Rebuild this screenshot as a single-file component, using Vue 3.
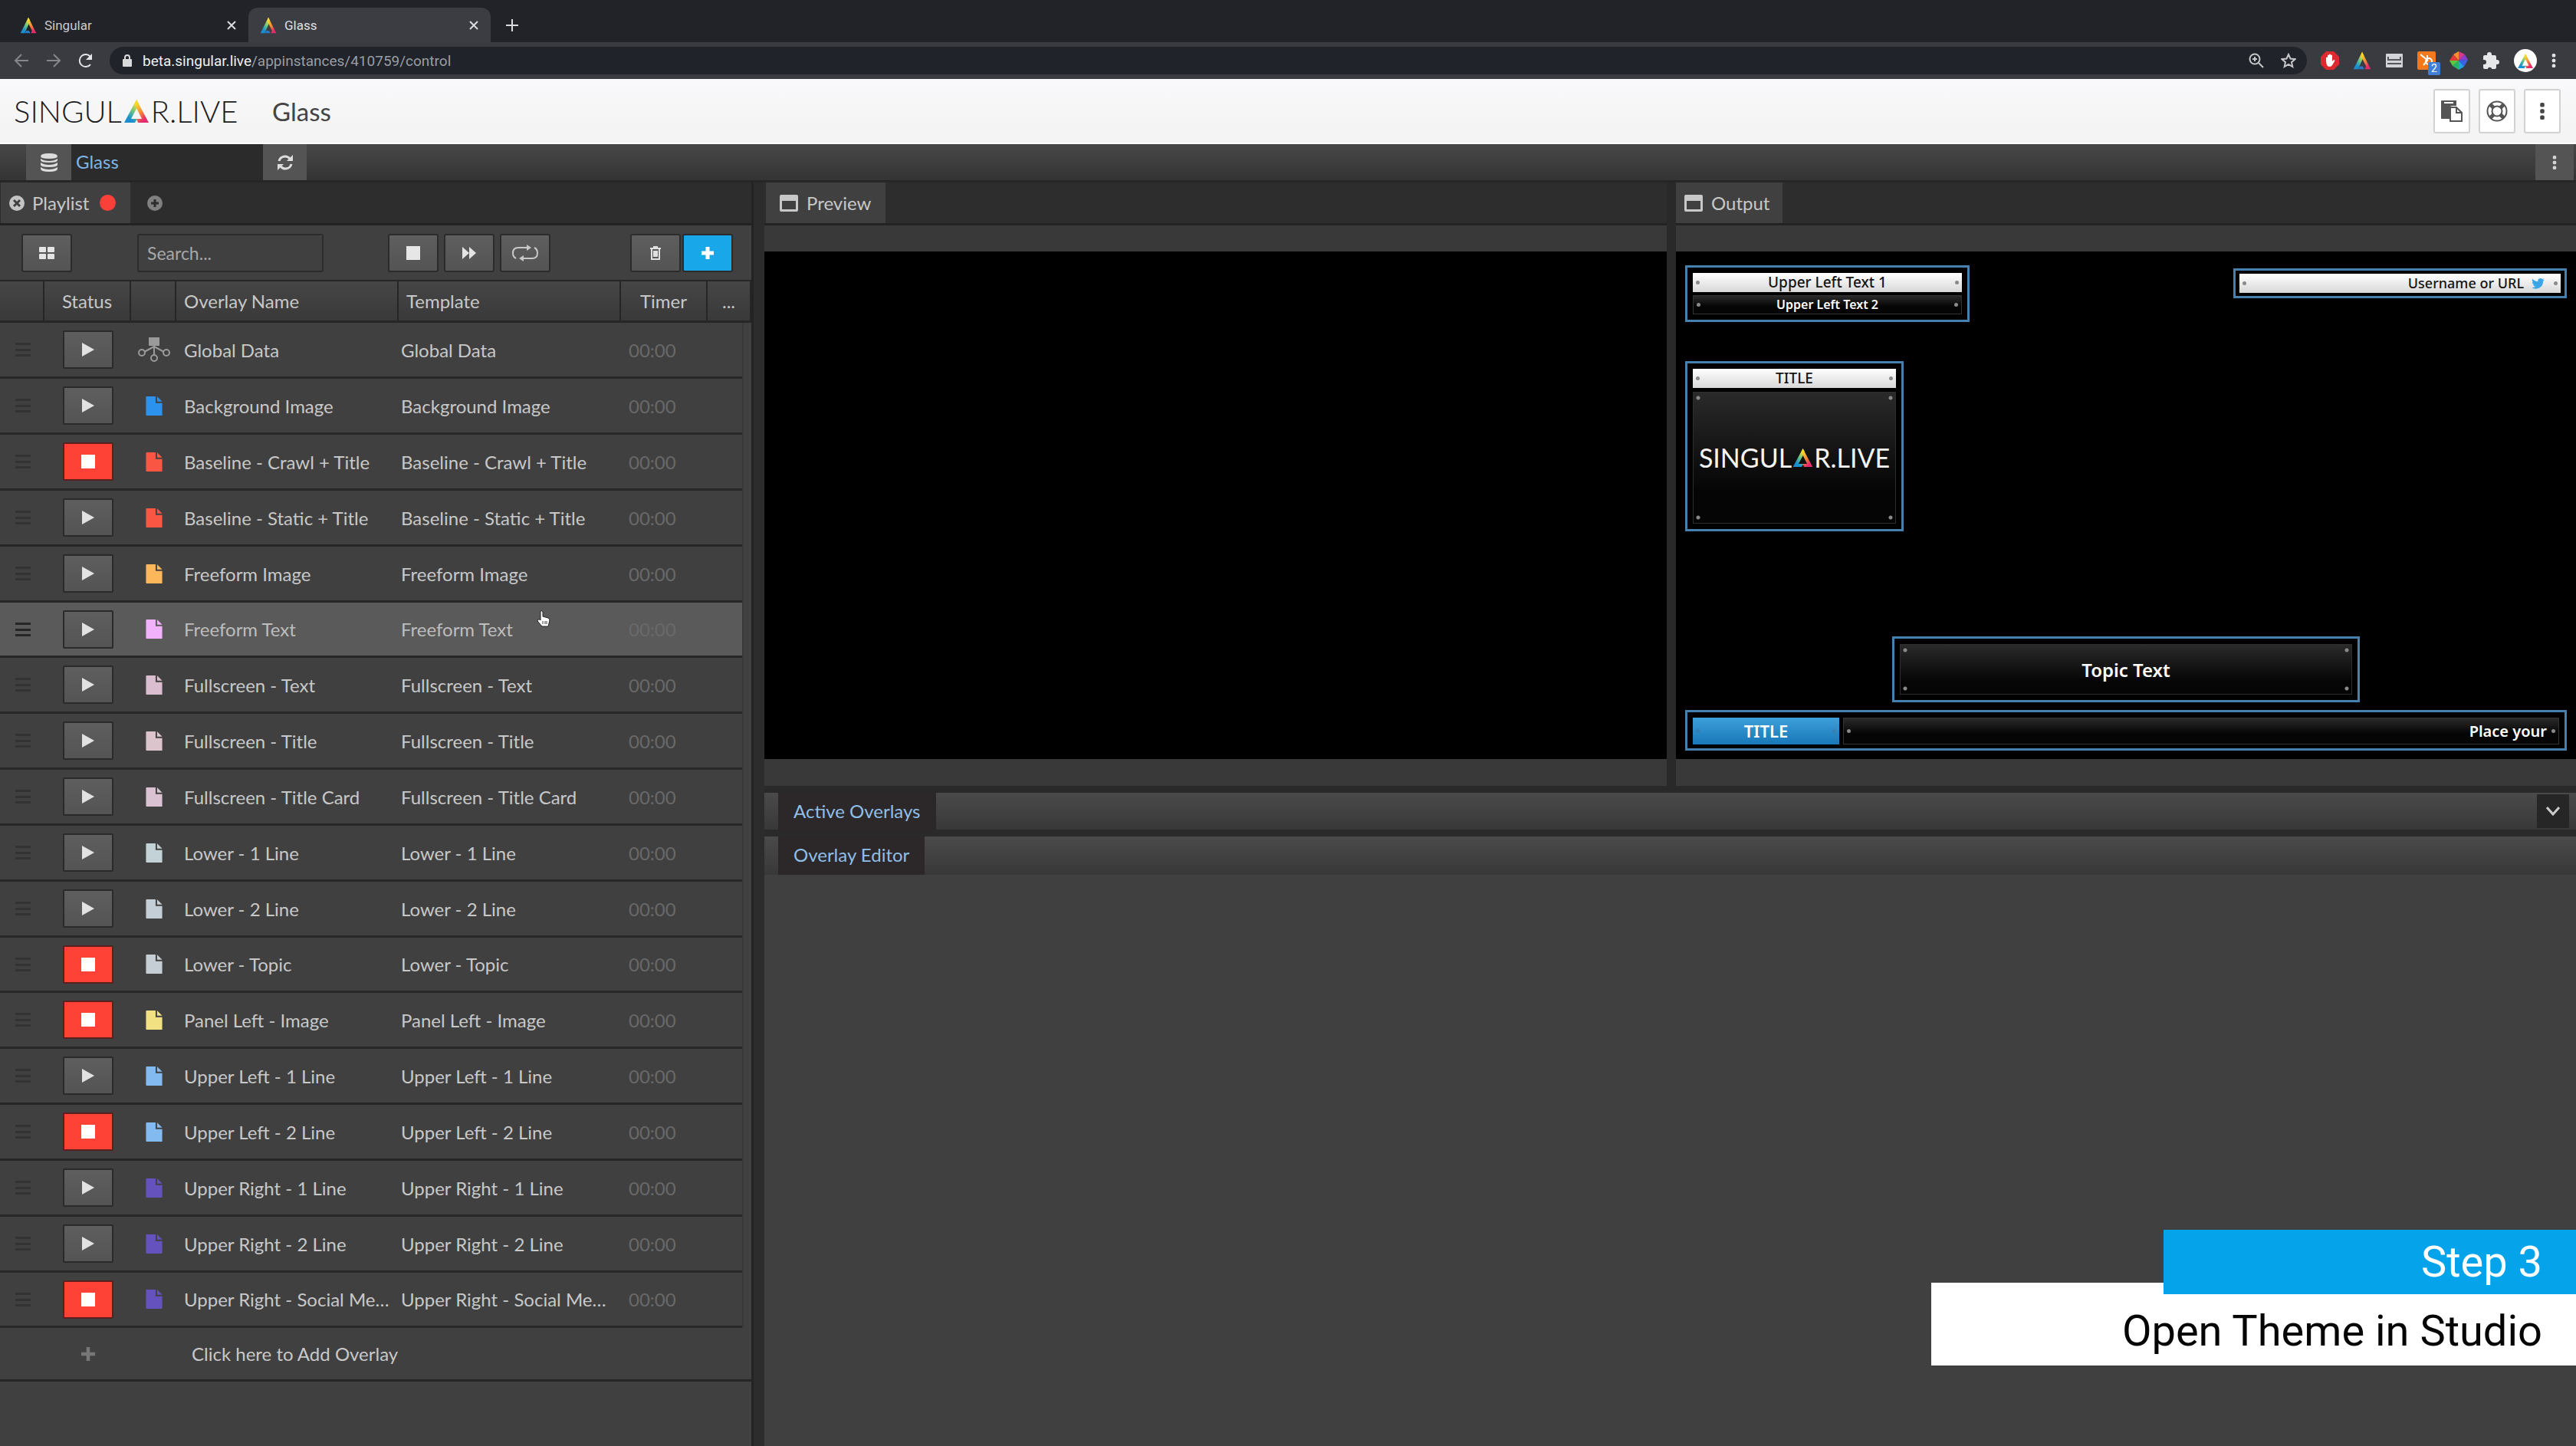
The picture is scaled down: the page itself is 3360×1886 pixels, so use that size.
<script setup>
import { ref } from 'vue'

const search = ref('')
const address = { host: 'beta.singular.live', path: '/appinstances/410759/control' }

const rows = [
  { name: 'Global Data', icon: 'global' },
  { name: 'Background Image', color: '#2b93ee' },
  { name: 'Baseline - Crawl + Title', color: '#f95743', live: true },
  { name: 'Baseline - Static + Title', color: '#f95743' },
  { name: 'Freeform Image', color: '#fdb75b' },
  { name: 'Freeform Text', color: '#f2b2fb', hover: true },
  { name: 'Fullscreen - Text', color: '#dabdce' },
  { name: 'Fullscreen - Title', color: '#dcc4cc' },
  { name: 'Fullscreen - Title Card', color: '#dac2d2' },
  { name: 'Lower - 1 Line', color: '#c2d2d6' },
  { name: 'Lower - 2 Line', color: '#c4ced6' },
  { name: 'Lower - Topic', color: '#c4ced4', live: true },
  { name: 'Panel Left - Image', color: '#f1e183', live: true },
  { name: 'Upper Left - 1 Line', color: '#83baf0' },
  { name: 'Upper Left - 2 Line', color: '#83baf0', live: true },
  { name: 'Upper Right - 1 Line', color: '#6552bd' },
  { name: 'Upper Right - 2 Line', color: '#6552bd' },
  { name: 'Upper Right - Social Media', color: '#6552bd', live: true },
]
</script>

<template>
  <svg class="defs" aria-hidden="true">
    <defs>
      <linearGradient id="legL" x1="0.8" y1="0" x2="0.2" y2="1">
        <stop offset="0.1" stop-color="#f5e02e" />
        <stop offset="0.5" stop-color="#5cc08a" />
        <stop offset="0.8" stop-color="#1a8fd0" />
      </linearGradient>
      <linearGradient id="legR" x1="0.2" y1="0" x2="0.8" y2="1">
        <stop offset="0.1" stop-color="#f7d92c" />
        <stop offset="0.5" stop-color="#f58a34" />
        <stop offset="0.85" stop-color="#e62a6c" />
      </linearGradient>
    </defs>
    <symbol id="tri" viewBox="0 0 32 30">
      <path d="M16 0 L0 30 H14 L17 25 H9 L17.500 9 L19 5 Z" fill="url(#legL)" />
      <path d="M16 0 L32 30 H18 L16 25 H23 L13.500 6 Z" fill="url(#legR)" />
    </symbol>
    <symbol id="peak" viewBox="0 0 32 32">
      <path d="M16 1 L1 31 H9 L18 11 L19 7 Z" fill="url(#legL)" />
      <path d="M16 1 L31 31 H21 L23 26 L14 8 Z" fill="url(#legR)" />
      <path d="M9 31 L12 26 H17 L20 31 Z" fill="#2a78c8" />
    </symbol>
    <symbol id="win" viewBox="0 0 24 22">
      <path fill-rule="evenodd" d="M2 0H22Q24 0 24 2V20Q24 22 22 22H2Q0 22 0 20V2Q0 0 2 0ZM3 8V19H21V8Z" fill="currentColor" />
    </symbol>
    <symbol id="dots" viewBox="0 0 8 24">
      <rect x="1" y="0" width="6" height="6" rx="2" fill="currentColor" />
      <rect x="1" y="9" width="6" height="6" rx="2" fill="currentColor" />
      <rect x="1" y="18" width="6" height="6" rx="2" fill="currentColor" />
    </symbol>
    <symbol id="doc" viewBox="0 0 22 26">
      <path d="M1 0H13V9H22V26H1Q0 26 0 25V1Q0 0 1 0Z" fill="currentColor" />
      <path d="M15 0L22 7H15Z" fill="currentColor" />
    </symbol>
  </svg>

  <div class="page">
    <!-- browser window -->
    <div class="tabs">
      <div class="tab">
        <svg class="fav"><use href="#peak" /></svg>
        <span class="tab-name">Singular</span>
        <button class="close" aria-label="Close Singular tab"><svg viewBox="0 0 12 12"><path d="M1 1L11 11M11 1L1 11" /></svg></button>
      </div>
      <div class="tab active">
        <svg class="fav"><use href="#peak" /></svg>
        <span class="tab-name">Glass</span>
        <button class="close" aria-label="Close Glass tab"><svg viewBox="0 0 12 12"><path d="M1 1L11 11M11 1L1 11" /></svg></button>
      </div>
      <button class="newtab" aria-label="New tab"><svg viewBox="0 0 16 16"><path d="M8 0V16M0 8H16" /></svg></button>
    </div>
    <div class="navbar">
      <div class="nav">
        <button class="navbtn dim" aria-label="Back"><svg viewBox="0 0 20 20"><path d="M19 10H2M10 2L2 10L10 18" /></svg></button>
        <button class="navbtn dim" aria-label="Forward"><svg viewBox="0 0 20 20"><path d="M1 10H18M10 2L18 10L10 18" /></svg></button>
        <button class="navbtn" aria-label="Reload"><svg viewBox="0 0 20 20"><path d="M16 15A8 8 0 1 1 16 5" /><path d="M18 1V9H10Z" fill="currentColor" stroke="none" /></svg></button>
      </div>
      <div class="omnibox">
        <svg class="lock" viewBox="0 0 12 16"><rect x="0" y="6" width="12" height="10" rx="1" fill="#d8d9db" /><path d="M3 7V4A3 3 0 0 1 9 4V7" fill="none" stroke="#d8d9db" stroke-width="2" /></svg>
        <span class="url"><b>{{ address.host }}</b>{{ address.path }}</span>
        <svg class="mag" viewBox="0 0 20 20"><circle cx="8" cy="8" r="6.500" /><path d="M13 13L19 19M5 8H11M8 5V11" /></svg>
        <svg class="star" viewBox="0 0 20 20"><path d="M10 2L12.500 7.500L18.500 8.200L14 12.200L15.300 18L10 15L4.700 18L6 12.200L1.500 8.200L7.500 7.500Z" /></svg>
      </div>
      <div class="exts">
        <svg viewBox="0 0 24 24"><path d="M7 0H17L24 7V17L17 24H7L0 17V7Z" fill="#dc2a2e" /><path d="M7 12V8Q8 7 9 8V5Q10 4 11 5V4Q12 3 13 4V5Q14 4 15 5V13L17 11Q19 11 18 13L15 18Q14 20 11 20Q7 19 7 12Z" fill="#fff" /></svg>
        <svg><use href="#peak" /></svg>
        <svg viewBox="0 0 24 24"><rect x="1" y="3" width="22" height="18" rx="1" fill="#d2d3d8" /><path d="M3 16H21M4 7V11H20V7" stroke="#55565c" stroke-width="2" fill="none" /></svg>
        <span class="hub">
          <svg viewBox="0 0 24 24"><rect width="24" height="24" rx="2" fill="#f2791e" /><path d="M4 4L14 12M13 5V12L8 18" stroke="#fff" stroke-width="2" fill="none" /><circle cx="15" cy="13" r="4" stroke="#fff" stroke-width="2" fill="none" /></svg>
          <span class="badge">2</span>
        </span>
        <svg viewBox="0 0 24 24">
          <path d="M12 12L12 0L5 4Z" fill="#f2912c" /><path d="M12 12V0L20 4Z" fill="#d83a8c" /><path d="M12 12L20 4L24 11Z" fill="#8a3fd0" /><path d="M12 12L24 11L19 20Z" fill="#3a62e8" /><path d="M12 12L19 20L12 24Z" fill="#22a4e0" /><path d="M12 12V24L4 19Z" fill="#28b463" /><path d="M12 12L4 19L0 12Z" fill="#5ac83c" /><path d="M12 12L0 12L5 4Z" fill="#e23c32" />
        </svg>
        <svg viewBox="0 0 24 24"><path d="M20 11H19V7Q19 5 17 5H13V4A3 3 0 0 0 7 4V5H4Q2 5 2 7V11H3A3 3 0 0 1 3 17H2V21Q2 23 4 23H8V22A3 3 0 0 1 13 22V23H17Q19 23 19 21V17H20A3 3 0 0 0 20 11Z" fill="#e6e7e9" /></svg>
        <span class="avatar"><svg><use href="#tri" /></svg></span>
        <svg class="vdots"><use href="#dots" /></svg>
      </div>
    </div>

    <!-- application header -->
    <header class="apphead">
      <a href="#" class="logo" aria-label="Singular.live">SINGUL<svg><use href="#tri" /></svg>R.LIVE</a>
      <h1>Glass</h1>
      <div class="headbtns">
        <button aria-label="Paste"><svg viewBox="0 0 28 28"><path d="M1 0H20V7H15Q11 7 11 10V24H1Q0 24 0 23V1Q0 0 1 0Z" fill="#555" /><rect x="4" y="2" width="12" height="2" fill="#fff" /><path d="M12 9H20L27 16V27H12Z" fill="#fff" stroke="#555" stroke-width="2" /><path d="M20 9V16H27" fill="none" stroke="#555" stroke-width="2" /></svg></button>
        <button aria-label="Help"><svg viewBox="0 0 28 28" fill="none"><circle cx="14" cy="14" r="12.500" stroke="#555" stroke-width="2" /><circle cx="14" cy="14" r="6.500" stroke="#555" stroke-width="2" /><path d="M5 5L10 10M23 5L18 10M5 23L10 18M23 23L18 18" stroke="#555" stroke-width="5" /></svg></button>
        <button aria-label="Menu"><svg class="hd"><use href="#dots" /></svg></button>
      </div>
    </header>

    <!-- project bar -->
    <div class="projbar">
      <button class="sq db" aria-label="Data"><svg viewBox="0 0 22 24" fill="#ddd"><path d="M0 4Q0 0 11 0T22 4Q22 7 11 7T0 4ZM0 7Q4 10 11 10T22 7V9Q22 12 11 12T0 9ZM0 12Q4 15 11 15T22 12V15Q22 18 11 18T0 15ZM0 18Q4 21 11 21T22 18V20Q22 24 11 24T0 20Z" /></svg></button>
      <span class="proj">Glass</span>
      <button class="sq re" aria-label="Refresh"><svg viewBox="0 0 22 22"><path d="M3 9A8 8 0 0 1 17 6M19 13A8 8 0 0 1 5 16" fill="none" stroke="#ddd" stroke-width="3" /><path d="M21 1V9H13ZM1 21V13H9Z" fill="#ddd" /></svg></button>
      <button class="sq more" aria-label="More"><svg><use href="#dots" /></svg></button>
    </div>

    <div class="work">
      <!-- playlist -->
      <aside class="playlist">
        <div class="strip">
          <div class="ptab first">
            <svg class="circ" viewBox="0 0 20 20"><circle cx="10" cy="10" r="10" fill="#c4c4c4" /><path d="M6 6L14 14M14 6L6 14" stroke="#404040" stroke-width="3" /></svg>
            <span>Playlist</span><i class="rec"></i>
          </div>
          <button class="addtab" aria-label="Add playlist"><svg class="circ" viewBox="0 0 20 20"><circle cx="10" cy="10" r="10" fill="#808080" /><path d="M5 10H15M10 5V15" stroke="#2d2d2d" stroke-width="3" /></svg></button>
        </div>
        <div class="tools">
          <button class="tool grid" aria-label="Grid view"><svg viewBox="0 0 20 16" fill="#e4e4e4"><rect width="9" height="7" rx="1" /><rect x="11" width="9" height="7" rx="1" /><rect y="9" width="9" height="7" rx="1" /><rect x="11" y="9" width="9" height="7" rx="1" /></svg></button>
          <input v-model="search" class="search" type="text" placeholder="Search..." aria-label="Search">
          <div class="play">
            <button class="tool" aria-label="Stop all"><i class="stop"></i></button>
            <button class="tool" aria-label="Next"><svg viewBox="0 0 20 16" fill="#e4e4e4"><path d="M1 0L10 8L1 16ZM10 0L19 8L10 16Z" /></svg></button>
            <button class="tool" aria-label="Loop"><svg class="loop" viewBox="0 0 36 22"><path d="M22 4H9Q2 4 2 11Q2 16 6 18M14 18H27Q34 18 34 11Q34 6 30 4" fill="none" stroke="#c8c8c8" stroke-width="2" /><path d="M20 0L26 4L20 8ZM16 14L10 18L16 22Z" fill="#c8c8c8" /></svg></button>
          </div>
          <div class="edit">
            <button class="tool" aria-label="Delete"><svg class="trash" viewBox="0 0 16 18"><path d="M1 3H15M6 3V1H10V3M3 4V17H13V4M6 6V14M8 6V14M10 6V14" fill="none" stroke="#e0e0e0" stroke-width="2" /></svg></button>
            <button class="tool blue" aria-label="Add overlay"><svg class="plus" viewBox="0 0 16 16"><path d="M8 0V16M0 8H16" stroke="#fff" stroke-width="5" /></svg></button>
          </div>
        </div>
        <table>
          <colgroup>
            <col class="c1"><col class="c2"><col class="c3"><col class="c4"><col class="c4"><col class="c2"><col class="c7"><col>
          </colgroup>
          <thead>
            <tr><th></th><th class="mid">Status</th><th></th><th>Overlay Name</th><th>Template</th><th class="mid">Timer</th><th class="mid" colspan="2">...</th></tr>
          </thead>
          <tbody>
            <tr v-for="r in rows" :key="r.name" :class="{ hover: r.hover }">
              <td><i class="grip"></i></td>
              <td>
                <button class="status" :class="{ live: r.live }" :aria-label="(r.live ? 'Stop ' : 'Play ') + r.name">
                  <i v-if="r.live" class="stop"></i>
                  <svg v-else viewBox="0 0 16 18"><path d="M0 0L16 9L0 18Z" fill="#e2e2e2" /></svg>
                </button>
              </td>
              <td class="ic">
                <svg v-if="r.icon" class="global" viewBox="0 0 42 32" fill="none" stroke="#9a9a9a" stroke-width="2"><rect x="15" y="1" width="12" height="9" fill="#9a9a9a" /><path d="M21 10V24M21 12L8 19M21 12L34 19" /><circle cx="5" cy="20" r="4" /><circle cx="37" cy="20" r="4" /><circle cx="21" cy="27" r="4" /></svg>
                <svg v-else class="doc" :style="{ color: r.color }"><use href="#doc" /></svg>
              </td>
              <td class="txt">{{ r.name }}</td>
              <td class="txt t2">{{ r.name }}</td>
              <td class="timer">00:00</td>
              <td></td>
              <td class="gutter"></td>
            </tr>
          </tbody>
          <tfoot>
            <tr><td></td><td class="mid"><svg class="plus dimplus" viewBox="0 0 16 16"><path d="M8 0V16M0 8H16" stroke="#777" stroke-width="4" /></svg></td><td></td><td class="add" colspan="5"><button>Click here to Add Overlay</button></td></tr>
          </tfoot>
        </table>
        <svg class="cursor" viewBox="0 0 18 22"><path d="M5 1Q7 0 8 2V8L15 10Q17 11 17 13L15 21H7L1 14Q1 11 4 12L5 13Z" fill="#fff" stroke="#222" stroke-width="1" /><path d="M8 14V18M11 14V18M13 14V18" stroke="#444" /></svg>
      </aside>

      <!-- monitors and editor -->
      <main>
        <div class="monitors">
          <section class="monitor">
            <div class="strip"><div class="ptab prev"><svg class="win"><use href="#win" /></svg><span>Preview</span></div></div>
            <div class="canvas ratio"></div>
          </section>
          <section class="monitor">
            <div class="strip"><div class="ptab out"><svg class="win"><use href="#win" /></svg><span>Output</span></div></div>
            <div class="canvas">
              <div class="ov ul">
                <div class="bar light">Upper Left Text 1</div>
                <div class="bar dark small">Upper Left Text 2</div>
              </div>
              <div class="ov ur"><div class="bar light right">Username or URL
                <svg class="bird" viewBox="0 0 24 20"><path d="M24 2.400L21.600 4.900Q21.800 13 15.200 17.400Q7.500 21.600 0 17.300Q4 17.600 7.200 15.200Q4 15 2.700 11.800H4.900Q1 10.400 1 6.900L3.200 7.500Q-0.200 4.700 1.700 1Q5.800 5.900 11.800 6.100Q11 2.500 13.700 0.800Q17 -1 20 1.600L23 0.400L21 3.100Z" fill="#3aa6e8" /></svg></div></div>
              <div class="ov pl">
                <div class="bar light">TITLE</div>
                <div class="pane four"><span class="logo white">SINGUL<svg><use href="#tri" /></svg>R.LIVE</span></div>
              </div>
              <div class="ov topic"><div class="pane four">Topic Text</div></div>
              <div class="ov low">
                <div class="bar title">TITLE</div>
                <div class="bar dark right crawl">Place your</div>
              </div>
            </div>
          </section>
        </div>
        <div class="section"><h2>Active Overlays</h2><button class="chev" aria-label="Expand active overlays"><svg viewBox="0 0 18 12"><path d="M1 1L9 10L17 1" fill="none" stroke="#ccc" stroke-width="3" /></svg></button></div>
        <div class="section editor"><h2>Overlay Editor</h2></div>
      </main>
    </div>

    <div class="caption">
      <div class="step">Step 3</div>
      <div class="what">Open Theme in Studio</div>
    </div>
  </div>
</template>

<style>
body { background: #404040; }
</style>

<style scoped>
* { box-sizing: border-box; margin: 0; padding: 0; }
.defs { position: absolute; width: 0; height: 0; }
.page { position: relative; display: flex; flex-direction: column; min-height: 100vh; overflow: hidden; font-family: Lato, "Open Sans", sans-serif; font-size: 24px; color: #c8c8c8; background: #404040; }
button { border: 0; background: none; color: inherit; font: inherit; display: flex; align-items: center; justify-content: center; }
svg { display: block; flex: none; }

.tabs { display: flex; height: 55px; padding-top: 10px; background: #212328; font-family: Roboto, Inter, sans-serif; font-size: 17px; color: #c9cacd; }
.tab { display: flex; align-items: center; width: 316px; padding: 0 16px 0 15px; border-radius: 12px 12px 0 0; }
.tab:first-child { width: 324px; padding-left: 26px; }
.tab.active { background: #3c3d42; color: #dedfe1; }
.fav { width: 22px; height: 22px; }
.tab-name { flex: 1; padding-left: 10px; }
.close svg { width: 12px; height: 12px; }
.newtab { margin-left: 20px; }
.newtab svg { width: 16px; height: 16px; }
.close path, .newtab path { stroke: #dadbdd; stroke-width: 2; }

.navbar { display: flex; align-items: center; height: 48px; background: #3a3b40; }
.nav { display: flex; gap: 22px; width: 143px; padding-left: 18px; }
.navbtn { color: #e4e5e7; }
.navbtn.dim { color: #85868a; }
.navbtn svg { width: 20px; height: 20px; fill: none; stroke: currentColor; stroke-width: 2; }
.omnibox { flex: 1; display: flex; align-items: center; height: 36px; padding: 0 14px 0 17px; border-radius: 18px; background: #202329; color: #9a9da2; font-family: Roboto, Inter, sans-serif; font-size: 19px; }
.lock { width: 12px; height: 16px; }
.url { flex: 1; padding-left: 14px; }
.url b { font-weight: 400; color: #f0f1f2; }
.mag, .star { width: 20px; height: 20px; fill: none; stroke: #c6c7ca; stroke-width: 2; }
.star { margin-left: 22px; }
.exts { display: flex; align-items: center; gap: 18px; padding: 0 25px 0 18px; }
.exts > svg, .hub svg { width: 24px; height: 24px; }
.hub { position: relative; }
.badge { position: absolute; left: 14px; top: 14px; width: 16px; height: 17px; border-radius: 2px; background: #3f7fd8; color: #fff; font: 14px/17px Roboto, sans-serif; text-align: center; }
.avatar { display: flex; align-items: center; justify-content: center; width: 30px; height: 30px; border-radius: 50%; background: #fff; }
.avatar svg { width: 20px; height: 19px; }
.exts .vdots { width: 8px; height: 18px; color: #e2e3e5; }

.apphead { display: flex; align-items: center; height: 85px; padding: 0 20px 0 18px; background: linear-gradient(#f9f9fb, #f3f3f3); border-bottom: 2px solid #fff; }
.logo { display: flex; align-items: center; width: 294px; color: #1c1c1c; font: 300 40px/44px Lato, sans-serif; text-decoration: none; }
.logo svg { width: 32px; height: 30px; margin: 0 3px; }
h1 { padding-left: 43px; font-weight: 400; font-size: 33px; color: #444; }
.headbtns { display: flex; gap: 11px; margin-left: auto; }
.headbtns button { width: 48px; height: 58px; border: 2px solid #d2d2d2; border-radius: 3px; background: #fff; color: #444; }
.headbtns svg { width: 28px; height: 28px; }
.headbtns .hd { width: 8px; height: 22px; }

.projbar { display: flex; height: 50px; padding: 0 3px 0 34px; background: linear-gradient(#474747, #343434); border-bottom: 3px solid #262626; }
.sq { background: #545454; }
.db { width: 59px; }
.db svg { width: 22px; height: 24px; }
.proj { width: 250px; padding-left: 6px; background: #2b2b2b; color: #7db6e6; line-height: 46px; }
.re { width: 57px; }
.re svg { width: 24px; height: 22px; }
.more { width: 50px; margin-left: auto; color: #d4d4d4; }
.more svg { width: 8px; height: 18px; }

.work { flex: 1; display: grid; grid-template-columns: 983px 1fr; }
.playlist { position: relative; border-right: 3px solid #232323; }
main { border-left: 14px solid #2c2c2c; min-width: 0; }
.strip { display: flex; height: 56px; background: #2d2d2d; border-bottom: 3px solid #232323; }
.ptab { display: flex; align-items: center; background: #404040; }
.ptab.first { width: 169px; padding-left: 11px; margin-left: 1px; }
.ptab.first span { padding: 0 14px 0 10px; }
.circ { width: 20px; height: 20px; }
.rec { width: 21px; height: 21px; border-radius: 50%; background: #fb4039; }
.addtab { width: 64px; }

.tools { display: flex; align-items: center; height: 73px; padding: 0 24px 0 28px; border-bottom: 2px solid #262626; }
.tool { width: 66px; height: 50px; border: 2px solid #2b2b2b; border-radius: 3px; background: linear-gradient(#5e5e5e, #545454); }
.tool svg { width: 20px; height: 16px; }
.search { width: 243px; height: 50px; margin-left: 85px; padding: 0 11px; border: 2px solid #2c2c2c; border-radius: 3px; background: #404040; color: #c6c6c6; font: 23px Lato, sans-serif; }
.search::placeholder { color: #a8a8a8; opacity: 1; }
.play { display: flex; gap: 7px; margin-left: 84px; }
.edit { display: flex; gap: 2px; margin-left: auto; }
.blue { background: #18a8ea; }
.stop { display: block; width: 18px; height: 18px; background: #e6e6e6; }
.tool .loop { width: 36px; height: 22px; }
.tool .trash { width: 16px; height: 18px; }
.plus, .tool .plus { width: 16px; height: 16px; }

table { width: 100%; table-layout: fixed; border-collapse: separate; border-spacing: 0; }
.c1 { width: 58px; } .c2 { width: 113px; } .c3 { width: 59px; } .c4 { width: 290px; } .c7 { width: 45px; }
th { height: 54px; padding: 0 10px; border-right: 2px solid #262626; border-bottom: 3px solid #262626; background: linear-gradient(#464646, #393939); font-weight: 400; text-align: left; }
.mid { text-align: center; }
td { height: 73px; border-bottom: 3px solid #272727; }
tr:nth-child(6n) td { height: 72px; }
.hover td { background: #5a5a5a; color: #bdbdbd; }
tr td.gutter { border-bottom: 0; border-left: 2px solid #383838; background: #404040; }
.grip { display: block; width: 20px; height: 18px; margin-left: 20px; background: linear-gradient(#333 0 3px, transparent 3px 8px, #333 8px 11px, transparent 11px 15px, #333 15px); }
.hover .grip { background: linear-gradient(#262626 0 3px, transparent 3px 8px, #262626 8px 11px, transparent 11px 15px, #262626 15px); }
.status { width: 66px; height: 50px; margin-left: 24px; border: 2px solid #2a2a2a; border-radius: 2px; background: linear-gradient(#5e5e5e, #545454); }
.status svg { width: 16px; height: 18px; }
.status.live { background: #ff4136; border-color: #5a2020; }
.live .stop { background: #fff; }
.ic svg { margin: 0 auto; }
.doc { width: 22px; height: 25px; }
.global { width: 42px; height: 32px; }
.txt { padding: 0 9px 0 10px; white-space: nowrap; overflow: hidden; text-overflow: ellipsis; }
.txt.t2 { padding: 0 16px 0 3px; }
.timer, .hover .timer { padding-left: 10px; color: #696969; }
tfoot td { height: 70px; }
.dimplus { margin: 0 auto; width: 20px; height: 18px; }
.add { padding-left: 20px; }
.cursor { position: absolute; left: 700px; top: 558px; width: 18px; height: 22px; }

.monitors { display: grid; grid-template-columns: 1177fr 1174fr; column-gap: 12px; background: #292929; border-bottom: 9px solid #292929; }
.monitor { display: flex; flex-direction: column; min-width: 0; background: #393939; padding-bottom: 35px; }
.prev { width: 156px; padding-left: 18px; margin-left: 2px; }
.out { width: 139px; padding-left: 11px; }
.win { width: 24px; height: 22px; margin-right: 11px; }
.canvas { position: relative; flex: 1; margin-top: 34px; background: #000; color: #fff; font-family: "Noto Sans", "Open Sans", sans-serif; }
.ratio { flex: none; aspect-ratio: 16 / 9; }
.ov { position: absolute; border: 3px solid #4580ae; padding: 7px; font-size: 19px; font-weight: 500; }
.bar { position: relative; height: 25px; line-height: 25px; text-align: center; }
.light { background: linear-gradient(#fff, #d8d8d8); color: #141414; }
.dark { background: linear-gradient(#2a2a2a, #050505 60%); border: 1px solid #333; font-weight: 600; }
.small { margin-top: 4px; line-height: 23px; font-size: 16px; }
.right { display: flex; justify-content: flex-end; align-items: center; }
.bar::before, .bar::after { content: ""; position: absolute; top: 50%; left: 4px; width: 5px; height: 5px; margin-top: -3px; border-radius: 50%; background: #8a8a8a; }
.bar::after { left: auto; right: 4px; }
.ul { left: 12px; top: 18px; width: 371px; height: 74px; }
.ur { right: 12px; top: 22px; width: 435px; height: 39px; padding: 4px 5px; font-size: 18px; }
.ur .right { padding-right: 21px; }
.bird { width: 17px; height: 14px; margin-left: 10px; }
.pl { left: 12px; top: 143px; width: 285px; height: 222px; display: flex; flex-direction: column; gap: 5px; }
.pane { flex: 1; display: flex; align-items: center; justify-content: center; border: 1px solid #2e2e2e; }
.four { background:
  radial-gradient(circle at 6px 7px, #8a8a8a 2px, transparent 3px),
  radial-gradient(circle at calc(100% - 6px) 7px, #8a8a8a 2px, transparent 3px),
  radial-gradient(circle at 6px calc(100% - 7px), #8a8a8a 2px, transparent 3px),
  radial-gradient(circle at calc(100% - 6px) calc(100% - 7px), #8a8a8a 2px, transparent 3px),
  linear-gradient(#2a2a2a, #050505 75%); }
.logo.white { width: auto; font-size: 34px; font-weight: 400; color: #f4f4f4; }
.logo.white svg { width: 27px; height: 24px; margin: 0 1px; }
.topic { left: 24%; width: 52%; bottom: 74px; height: 86px; display: flex; font-size: 24px; font-weight: 600; }
.low { left: 12px; right: 12px; bottom: 11px; height: 53px; display: flex; gap: 5px; }
.low .bar { height: 35px; line-height: 34px; font-size: 22px; font-weight: 600; }
.low .title { width: 191px; background: linear-gradient(#3d9fda, #1878b8); }
.low .title::before, .low .title::after { background: #3480b0; }
.low .crawl { flex: 1; padding-right: 15px; font-size: 20px; }

.section { display: flex; height: 57px; padding-left: 18px; background: linear-gradient(#4a4a4a, #383838); border-bottom: 9px solid #2a2a2a; }
.section.editor { height: 50px; border-bottom: 0; }
h2 { padding: 0 20px; background: #2c2829; color: #8fbfe8; font-weight: 400; font-size: 24px; line-height: 48px; }
.chev { width: 42px; height: 44px; margin: 2px 9px 0 auto; background: #262626; }
.chev svg { width: 18px; height: 12px; }

.caption { position: absolute; right: 0; bottom: 105px; width: 841px; font: 56px Roboto, sans-serif; text-align: right; display: flex; flex-direction: column; align-items: flex-end; }
.step { position: relative; width: 538px; height: 84px; padding-right: 44px; line-height: 84px; background: #05a4ea; color: #fff; }
.what { width: 100%; height: 108px; margin-top: -15px; padding-right: 44px; line-height: 126px; background: #fff; color: #050505; }
</style>
